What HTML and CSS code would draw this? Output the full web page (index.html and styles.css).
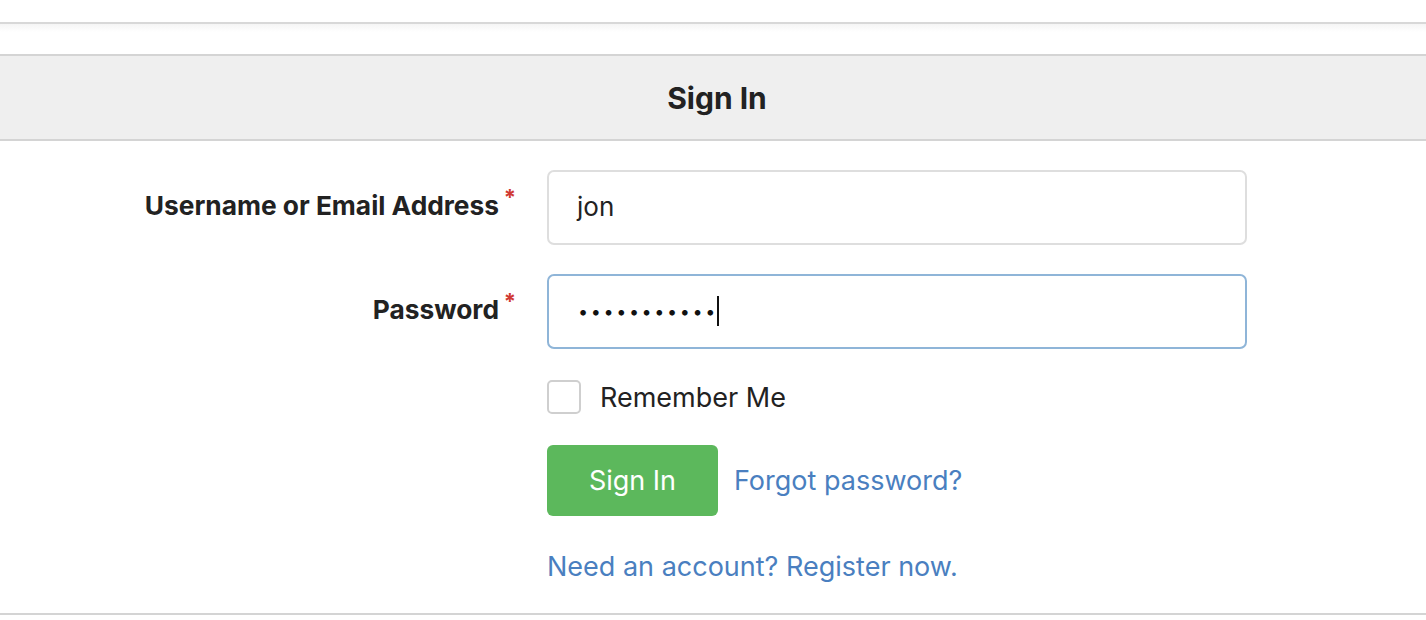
FILE: index.html
```html
<!DOCTYPE html>
<html>
<head>
<meta charset="utf-8">
<link rel="stylesheet" href="styles.css">
</head>
<body>
<div class="topbar"></div>
<div class="subbar"></div>
<div class="panel-heading">Sign In</div>
<form class="login-form">
  <label class="form-label">Username or Email Address<span class="req">*</span></label>
  <div class="field"><div class="text-input">jon</div></div>

  <label class="form-label">Password<span class="req">*</span></label>
  <div class="field"><div class="text-input focused"><span class="dots">•••••••••••</span><span class="caret"></span></div></div>

  <div></div>
  <div class="check-row"><span class="checkbox"></span><span class="check-label">Remember Me</span></div>

  <div></div>
  <div class="action-row"><button type="button" class="btn-success">Sign In</button><a class="link" href="#">Forgot password?</a></div>

  <div></div>
  <div class="register-row"><a class="link" href="#">Need an account? Register now.</a></div>
</form>
<div class="bottom-rule"></div>
</body>
</html>
```

FILE: styles.css
```css
html, body {
  margin: 0;
  padding: 0;
  background: #ffffff;
  font-family: Inter, "Noto Sans", "Liberation Sans", sans-serif;
  color: #222222;
}

.topbar {
  height: 22px;
  border-bottom: 2px solid #d8d8d8;
  background: #ffffff;
}

.subbar {
  height: 30px;
  border-bottom: 2px solid #d4d4d4;
  background: linear-gradient(#f5f5f5, #ffffff 8px);
}

.panel-heading {
  height: 83px;
  background: #efefef;
  border-bottom: 2px solid #d4d4d4;
  display: flex;
  align-items: center;
  justify-content: center;
  padding-left: 8px;
  font-size: 30px;
  font-weight: 700;
  color: #222222;
}

.login-form {
  display: grid;
  grid-template-columns: 518px 700px;
  column-gap: 29px;
  row-gap: 29px;
  padding-top: 29px;
  align-items: center;
}

.form-label {
  text-align: right;
  font-size: 26.3px;
  font-weight: 700;
  color: #222222;
  position: relative;
  padding-right: 19px;
  padding-bottom: 4px;
}

.req {
  position: absolute;
  right: 2px;
  top: -6px;
  color: #d03a32;
  font-size: 22px;
  font-weight: 700;
}

.text-input {
  box-sizing: border-box;
  height: 75px;
  border: 2px solid #dedede;
  border-radius: 7px;
  display: flex;
  align-items: center;
  padding-left: 28px;
  font-size: 26px;
  color: #222222;
  padding-bottom: 2px;
}

.text-input.focused {
  border-color: #8fb5d8;
}

.dots {
  font-size: 18px;
  letter-spacing: 2.6px;
  color: #111111;
  padding-top: 2px;
  padding-left: 1px;
}

.caret {
  display: inline-block;
  width: 2px;
  height: 30px;
  background: #111111;
  margin-left: -1px;
}

.check-row {
  display: flex;
  align-items: center;
  gap: 19px;
  margin-top: 2px;
}

.checkbox {
  width: 30px;
  height: 30px;
  border: 2px solid #cfcfcf;
  border-radius: 5px;
  display: inline-block;
}

.check-label {
  font-size: 27px;
  color: #222222;
}

.action-row {
  display: flex;
  align-items: center;
  gap: 16px;
  margin-top: 2px;
}

.btn-success {
  background: #5cb85c;
  color: #ffffff;
  border: none;
  border-radius: 6px;
  width: 171px;
  height: 71px;
  font-family: Inter, "Noto Sans", "Liberation Sans", sans-serif;
  font-size: 27px;
  padding: 0;
}

.link {
  color: #4a7fc0;
  text-decoration: none;
  font-size: 27px;
}

.register-row {
  margin-top: 5px;
}

.bottom-rule {
  margin-top: 30px;
  border-bottom: 2px solid #d4d4d4;
}
```
